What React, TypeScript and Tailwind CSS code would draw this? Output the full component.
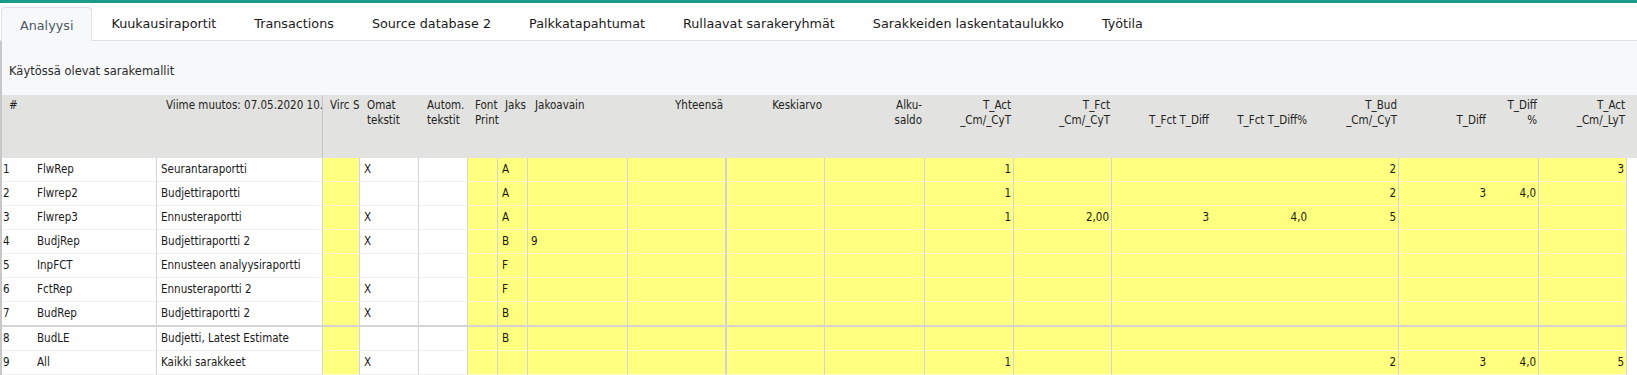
import React from 'react';

type Col = {
  key: string;
  w: string;
  yellow: boolean;
  line: string;
  right?: boolean;
  pad: string;
  head: string[];
  headPad: string;
};

const cols: Col[] = [
  { key: 'num', w: 'w-[31px]', yellow: false, line: '', pad: 'pl-[1px]', head: ['#'], headPad: 'pl-[7px]' },
  { key: 'code', w: 'w-[124px]', yellow: false, line: 'border-r border-r-[#d2d2d8]', pad: 'pl-[4px]', head: [''], headPad: '' },
  { key: 'name', w: 'w-[166px]', yellow: false, line: 'border-r border-r-[#d2d2d8]', pad: 'pl-[4px]', head: ['Viime muutos: 07.05.2020 10.'], headPad: 'pl-[9px]' },
  { key: 'virc', w: 'w-[29px]', yellow: true, line: '', pad: 'pl-[3px]', head: ['Virc'], headPad: 'pl-[7px]' },
  { key: 's', w: 'w-[8px]', yellow: true, line: 'border-r border-r-[#d2d2d8]', pad: '', head: ['S'], headPad: 'pl-[1px]' },
  { key: 'omat', w: 'w-[59px]', yellow: false, line: 'border-r border-r-[#d2d2d8]', pad: 'pl-[4px]', head: ['Omat', 'tekstit'], headPad: 'pl-[7px]' },
  { key: 'autom', w: 'w-[49px]', yellow: false, line: 'border-r border-r-[#d2d2d8]', pad: 'pl-[4px]', head: ['Autom.', 'tekstit'], headPad: 'pl-[8px]' },
  { key: 'font', w: 'w-[30px]', yellow: true, line: 'border-r border-r-[#d2d2d8]', pad: 'pl-[4px]', head: ['Font', 'Print'], headPad: 'pl-[7px]' },
  { key: 'jaks', w: 'w-[30px]', yellow: true, line: 'border-r border-r-[#d2d2d8]', pad: 'pl-[4px]', head: ['Jaks'], headPad: 'pl-[7px]' },
  { key: 'jakoavain', w: 'w-[100px]', yellow: true, line: 'border-r border-r-[#d2d2d8]', pad: 'pl-[3px]', head: ['Jakoavain'], headPad: 'pl-[7px]' },
  { key: 'yht', w: 'w-[99px]', yellow: true, line: 'border-r-2 border-r-[#d2d2d8]', right: true, pad: 'pr-[3px]', head: ['Yhteensä'], headPad: 'pr-[4px]' },
  { key: 'kesk', w: 'w-[98px]', yellow: true, line: 'border-r border-r-[#d2d2d8]', right: true, pad: 'pr-[3px]', head: ['Keskiarvo'], headPad: 'pr-[3px]' },
  { key: 'alku', w: 'w-[100px]', yellow: true, line: 'border-r border-r-[#d2d2d8]', right: true, pad: 'pr-[3px]', head: ['Alku-', 'saldo'], headPad: 'pr-[3px]' },
  { key: 'tact', w: 'w-[89px]', yellow: true, line: 'border-r border-r-[#d2d2d8]', right: true, pad: 'pr-[2px]', head: ['T_Act', '_Cm/_CyT'], headPad: 'pr-[3px]' },
  { key: 'tfct', w: 'w-[98px]', yellow: true, line: 'border-r border-r-[#d2d2d8]', right: true, pad: 'pr-[2px]', head: ['T_Fct', '_Cm/_CyT'], headPad: 'pr-[2px]' },
  { key: 'tfctd', w: 'w-[100px]', yellow: true, line: '', right: true, pad: 'pr-[3px]', head: ['', 'T_Fct T_Diff'], headPad: 'pr-[3px]' },
  { key: 'tfctdp', w: 'w-[98px]', yellow: true, line: '', right: true, pad: 'pr-[3px]', head: ['', 'T_Fct T_Diff%'], headPad: 'pr-[3px]' },
  { key: 'tbud', w: 'w-[89px]', yellow: true, line: 'border-r border-r-[#d2d2d8]', right: true, pad: 'pr-[2px]', head: ['T_Bud', '_Cm/_CyT'], headPad: 'pr-[2px]' },
  { key: 'tdiff', w: 'w-[90px]', yellow: true, line: '', right: true, pad: 'pr-[3px]', head: ['', 'T_Diff'], headPad: 'pr-[3px]' },
  { key: 'tdiffp', w: 'w-[50px]', yellow: true, line: 'border-r border-r-[#d2d2d8]', right: true, pad: 'pr-[2px]', head: ['T_Diff', '%'], headPad: 'pr-[2px]' },
  { key: 'tactly', w: 'w-[88px]', yellow: true, line: 'border-r border-r-[#d2d2d8]', right: true, pad: 'pr-[2px]', head: ['T_Act', '_Cm/_LyT'], headPad: 'pr-[2px]' },
  { key: 'rest', w: 'flex-1', yellow: true, line: '', pad: '', head: [''], headPad: '' },
];

const rows: Record<string, string>[] = [
  { num: '1', code: 'FlwRep', name: 'Seurantaraportti', omat: 'X', jaks: 'A', tact: '1', tbud: '2', tactly: '3' },
  { num: '2', code: 'Flwrep2', name: 'Budjettiraportti', jaks: 'A', tact: '1', tbud: '2', tdiff: '3', tdiffp: '4,0' },
  { num: '3', code: 'Flwrep3', name: 'Ennusteraportti', omat: 'X', jaks: 'A', tact: '1', tfct: '2,00', tfctd: '3', tfctdp: '4,0', tbud: '5' },
  { num: '4', code: 'BudjRep', name: 'Budjettiraportti 2', omat: 'X', jaks: 'B', jakoavain: '9' },
  { num: '5', code: 'InpFCT', name: 'Ennusteen analyysiraportti', jaks: 'F' },
  { num: '6', code: 'FctRep', name: 'Ennusteraportti 2', omat: 'X', jaks: 'F' },
  { num: '7', code: 'BudRep', name: 'Budjettiraportti 2', omat: 'X', jaks: 'B' },
  { num: '8', code: 'BudLE', name: 'Budjetti, Latest Estimate', jaks: 'B' },
  { num: '9', code: 'All', name: 'Kaikki sarakkeet', omat: 'X', tact: '1', tbud: '2', tdiff: '3', tdiffp: '4,0', tactly: '5' },
];

const tabs = [
  'Analyysi',
  'Kuukausiraportit',
  'Transactions',
  'Source database 2',
  'Palkkatapahtumat',
  'Rullaavat sarakeryhmät',
  'Sarakkeiden laskentataulukko',
  'Työtila',
];

export default function App() {
  return (
    <div className="h-[375px] w-[1637px] overflow-hidden bg-white text-[#1a1a1a]">
      {/* top strip */}
      <div className="h-[3px] bg-[#1a9a8b]" />

      {/* tabs */}
      <div className="flex h-[38px] items-end border-b border-[#dee1e5] bg-white pl-[1px] font-['DejaVu_Sans',sans-serif] text-[12.75px]">
        {tabs.map((t, i) => (
          <div
            key={t}
            className={
              i === 0
                ? '-mb-px flex h-[34px] items-center rounded-t-[4px] border border-b-0 border-[#dde0e4] bg-[#f7f8fa] px-[18px] pt-[2px] text-[#4d5966]'
                : 'flex h-[34px] items-center border border-transparent px-[18px] pt-[2px] text-[#1a1a1a]'
            }
          >
            {t}
          </div>
        ))}
      </div>

      <div className="border-l-2 border-l-[#c8c8c8]">
        {/* caption */}
        <div className="flex h-[54px] items-center bg-[#f7f8fa] pl-[7px] pt-[8px] font-['DejaVu_Sans',sans-serif] text-[11.5px] text-[#2a2a2a]">
          Käytössä olevat sarakemallit
        </div>

        <div className="font-['DejaVu_Sans_Condensed','Liberation_Sans',sans-serif] text-[11.5px]">
          {/* header */}
          <div className="flex h-[63px] bg-[#e2e2e0] pt-[3px] leading-[15px] text-[#222]">
            {cols.map((c) => (
              <div
                key={c.key}
                className={`flex-none whitespace-nowrap ${c.w} ${c.headPad} ${c.right ? 'text-right' : ''} ${
                  c.key === 'font' ? 'overflow-visible' : 'overflow-hidden'
                } ${c.key === 'name' ? '-mt-[3px] border-r border-r-[#c4c4c4] pt-[3px]' : ''}`}
              >
                {c.head.map((h, j) => (
                  <div key={j} className="h-[15px]">
                    {h}
                  </div>
                ))}
              </div>
            ))}
          </div>

          {/* body */}
          {rows.map((r, i) => (
            <div key={r.num} className={`flex ${i === 6 ? 'h-[25px]' : 'h-[24px]'}`}>
              {cols.map((c) => (
                <div
                  key={c.key}
                  className={`flex-none overflow-hidden whitespace-nowrap leading-[23px] ${c.w} ${c.pad} ${c.line} ${
                    c.yellow ? 'bg-[#ffff80]' : 'bg-white'
                  } ${c.right ? 'text-right' : ''} ${
                    i === 6
                      ? 'border-b-2 border-b-[#d4d4d4]'
                      : c.yellow
                      ? 'border-b border-b-[#fdfdd0]'
                      : 'border-b border-b-[#efefef]'
                  }`}
                >
                  {r[c.key] ?? ''}
                </div>
              ))}
            </div>
          ))}
        </div>
      </div>
    </div>
  );
}
